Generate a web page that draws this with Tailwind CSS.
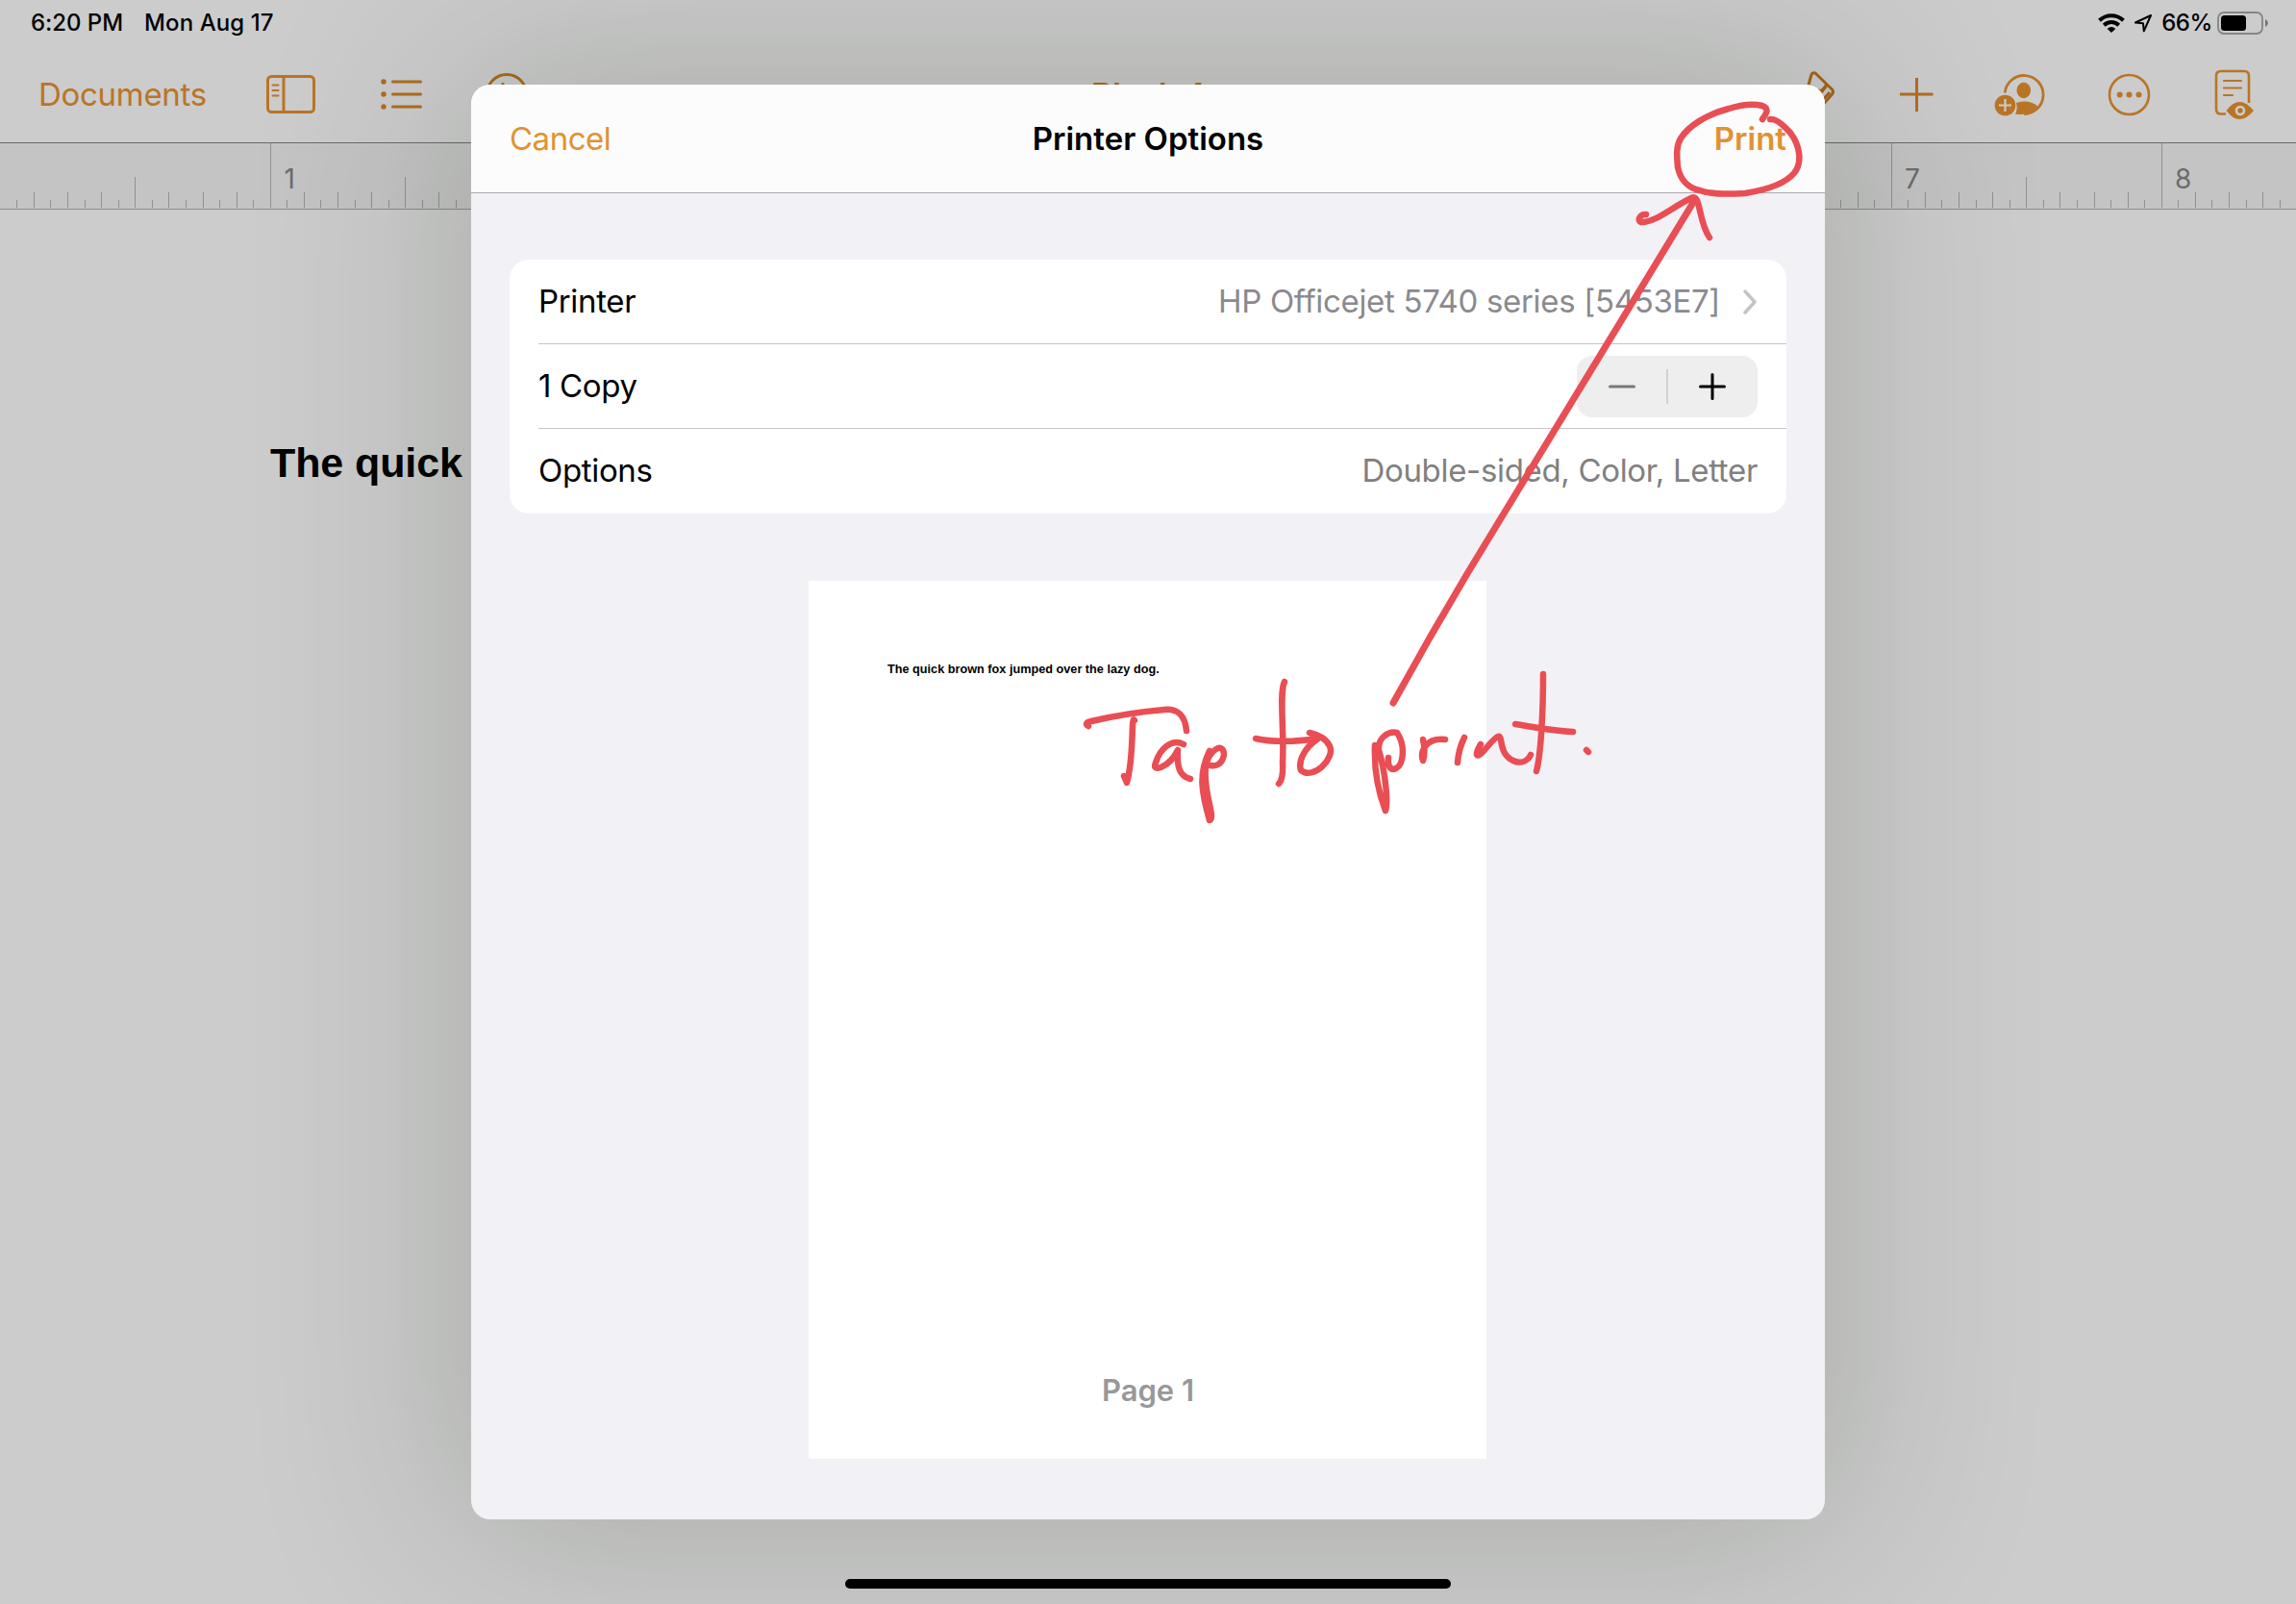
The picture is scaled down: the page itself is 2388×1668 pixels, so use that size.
<!DOCTYPE html>
<html lang="en">
<head>
<meta charset="utf-8">
<title>Printer Options</title>
<script src="https://cdn.jsdelivr.net/npm/@tailwindcss/browser@4"></script>
</head>
<body class="relative h-[1668px] w-[2388px] overflow-hidden bg-[#ccc] font-['Inter',sans-serif] text-black">
  <header class="flex h-[149px] flex-col border-b border-[#6a6a6a]">
    <div class="flex h-12 items-center justify-between pl-8 pr-[29px] text-[24px] leading-none">
      <div class="flex gap-[22px] font-medium"><span class="tracking-[-0.05px]">6:20 PM</span><span class="tracking-[0.1px]">Mon Aug 17</span></div>
      <div class="flex items-center font-medium">
        <svg class="mr-[9px]" width="28" height="22" viewBox="0 0 28 22" fill="none" stroke="#000" stroke-width="4"><path d="M1.5 8.2a18 18 0 0 1 25 0M6.3 13.2a11 11 0 0 1 15.4 0"/><path d="M14 21l-4.3-4.1a6 6 0 0 1 8.6 0z" fill="#000" stroke="none"/></svg>
        <svg class="mr-[9px]" width="20" height="20" viewBox="0 0 20 20" fill="none" stroke="#000" stroke-width="2" stroke-linejoin="round"><path d="M18 2L2 9.5l8 .8.8 8z"/></svg>
        <span class="mr-[5px] tracking-[-0.4px]">66%</span>
        <svg width="53" height="24" viewBox="0 0 53 24"><rect x="1" y="1" width="46" height="22" rx="6" fill="none" stroke="#858585" stroke-width="1.800"/><rect x="4" y="4" width="26" height="16" rx="3.500"/><path d="M50 8q3 1.500 3 4t-3 4z" fill="#777"/></svg>
      </div>
    </div>
    <div class="flex h-[100px] items-center pl-10 text-[#b97526]">
      <span class="w-[173px] pt-px text-[33px] tracking-[-0.3px]">Documents</span>
      <svg class="ml-16" width="51" height="40" viewBox="0 0 51 40" fill="none" stroke="currentColor" stroke-width="3"><rect x="1.500" y="1.500" width="48" height="37" rx="4"/><path d="M18 2v36"/><path d="M6.500 10.500h6M6.500 16h6M6.500 21.500h6" stroke-width="2" stroke-linecap="round"/></svg>
      <svg class="ml-[68px] text-[#b06d1e]" width="44" height="32" viewBox="0 0 44 32" fill="none" stroke="currentColor" stroke-width="3" stroke-linecap="round"><path d="M12.500 3h29M12.500 16h29M12.500 29h29"/><g fill="currentColor" stroke="none"><circle cx="3" cy="3" r="2.700"/><circle cx="3" cy="16" r="2.700"/><circle cx="3" cy="29" r="2.700"/></g></svg>
      <svg class="ml-[65px] text-[#ab691b]" width="44" height="44" viewBox="0 0 44 44" fill="none" stroke="currentColor" stroke-width="2.800"><circle cx="22" cy="22" r="20.500"/><path d="M18 10v24"/></svg>
      <span class="ml-[586px] text-[34px] font-semibold tracking-[-0.5px] text-[#ab691b]">Blank 4</span>
    </div>
  </header>

  <svg class="block text-[#8f908f]" width="2388" height="69" viewBox="0 0 2388 69">
    <rect width="2388" height="69" fill="#c4c4c4"/>
    <path d="M0 68.500h2388" stroke="#8a8a8a"/>
    <g id="ticks" stroke="currentColor" stroke-width="1"></g>
    <g fill="#6c6c6c" font-size="28" font-family="Inter"><text x="295.500" y="47">1</text><text x="1981" y="47">7</text><text x="2262" y="47">8</text></g>
  </svg>
  <p class="mt-[238px] pl-[281px] font-['Liberation_Sans',sans-serif] text-[43px] font-bold leading-[50px] tracking-[-0.1px]">The quick</p>

  <svg class="absolute left-[1870px] top-[60px] text-[#b97526]" width="500" height="80" viewBox="1870 60 500 80" fill="none" stroke="currentColor" stroke-width="3" stroke-linejoin="round">
    <path stroke="#a6651a" d="M1880 92l4-14.500q2-3 4.500-1L1905.500 93q2 2.500 0 5L1893 112M1899.500 88l-5 8-6 4M1903 96l-9 10"/>
    <path d="M1899 88l-5.500 5-5-1 3 8 9-9z" fill="#a6651a" stroke="none"/>
    <path d="M1993.500 81v35M1976 98h34.500" stroke="#b36f20" stroke-linecap="butt"/>
    <path d="M2085.200 96.500a20 20 0 1 1 20 22" stroke-width="2.800"/>
    <g fill="currentColor" stroke="none"><ellipse cx="2104.800" cy="94" rx="7.300" ry="8.200"/><path d="M2096 118.500q2.800-5.500 1-11.500 3-1.500 8-1.500 10 0 14.500 5.500-8 10-23.500 7.500z"/><circle cx="2085.500" cy="109.500" r="10.800"/></g>
    <path d="M2085.500 103v13M2079 109.500h13" stroke="#ccc" stroke-width="2.200"/>
    <circle cx="2214.500" cy="98.500" r="20.500" stroke-width="2.600"/>
    <g fill="currentColor" stroke="none"><circle cx="2204.700" cy="98.500" r="3"/><circle cx="2214.500" cy="98.500" r="3"/><circle cx="2224.500" cy="98.500" r="3"/></g>
    <path d="M2315 118.500h-5q-5 0-5-5V79q0-5 5-5h24q5 0 5 5v28" stroke-width="2.600"/>
    <path d="M2313 84h18M2313 91.500h18M2313 99h9" stroke-width="2.200" stroke-linecap="round"/>
    <path d="M2315.500 115q13.500-18 28.500 0-15 18-28.500 0z" fill="currentColor" stroke="none"/><circle cx="2330" cy="115" r="4" stroke="#ccc" stroke-width="2.600"/>
  </svg>

  <main class="absolute left-[490px] top-[88px] flex h-[1492px] w-[1408px] flex-col rounded-[20px] bg-[#f2f1f6] shadow-[0_0_210px_30px_rgba(15,35,0,0.155)]">
    <div class="grid h-[113px] grid-cols-3 items-center rounded-t-[20px] border-b border-[#a9a9ac] bg-[#fcfcfd] px-10 text-[33px] text-[#e19232]">
      <span class="pt-px tracking-[-0.5px]">Cancel</span>
      <h1 class="pt-px text-center font-semibold text-black">Printer Options</h1>
      <span class="pt-px text-right font-semibold">Print</span>
    </div>
    <section class="mx-10 mt-[69px] h-[264px] rounded-[20px] bg-white pl-[30px] text-[33px] tracking-[-0.33px]">
      <div class="flex h-[88px] items-center justify-between border-b border-[#c6c6c8] pr-[30px]"><span class="pt-px">Printer</span><span class="flex items-center gap-6 pt-px text-[#8a8a8e]">HP Officejet 5740 series [5453E7]<svg width="15" height="26" viewBox="0 0 15 26" fill="none" stroke="#c4c4c7" stroke-width="3.500" stroke-linecap="round" stroke-linejoin="round"><path d="M2 2l10 11L2 24"/></svg></span></div>
      <div class="flex h-[88px] items-center justify-between border-b border-[#c6c6c8] pr-[30px]"><span class="pt-px">1 Copy</span>
        <div class="grid h-16 w-[188px] grid-cols-[93px_95px] place-items-center rounded-[16px] bg-[#eee]">
          <svg width="28" height="4"><rect width="28" height="3" rx="1.500" y=".5" fill="#777977"/></svg>
          <div class="flex h-9 w-full items-center justify-center border-l-2 border-[#d2d2d4] pr-px"><svg width="28" height="28" stroke="#000" stroke-width="3" stroke-linecap="round"><path d="M14 1.500v25M1.500 14h25"/></svg></div>
        </div>
      </div>
      <div class="flex h-[88px] items-center justify-between pr-[30px]"><span>Options</span><span class="text-[#808080]">Double-sided, Color, Letter</span></div>
    </section>
    <section class="ml-[351px] mt-[70px] flex h-[913px] w-[705px] flex-col justify-between bg-white px-[82px] pb-[51px] pt-[84px]">
      <p class="whitespace-nowrap font-['Liberation_Sans',sans-serif] text-[12.700px] font-bold leading-4">The quick brown fox jumped over the lazy dog.</p>
      <p class="pl-px text-center text-[31px] font-semibold leading-10 text-[#98989a]">Page 1</p>
    </section>
  </main>

  <div class="absolute bottom-[16px] left-[879px] h-[10px] w-[630px] rounded-full bg-black"></div>

  <svg class="absolute left-0 top-0" width="2388" height="1668" viewBox="0 0 2388 1668" fill="none" stroke="#e94e54" stroke-width="6.500" stroke-linecap="round" stroke-linejoin="round">
    <path d="M1833 124C1838 117 1840 113 1833 110C1822 107 1811 109 1798 113C1775 119 1756 131 1748 144C1743 152 1744 162 1745 174C1748 188 1757 196 1768 198C1779 202 1799 202 1815 201C1834 198 1856 192 1866 180C1875 169 1872 151 1862 138C1854 129 1847 123 1841 124"/>
    <path d="M1449 731C1477 680 1497 645 1530 590L1762 209" stroke-width="7"/>
    <path d="M1712 223C1705 222 1702 231 1708 231C1722 231 1738 216 1759 206C1769 200 1766 230 1778 247"/>
    <path d="M1132 755Q1127 752 1135 750Q1174 741 1211 738Q1232 736 1234 760M1180 749C1176 742 1180 785 1172 814L1169 807"/>
    <path d="M1231 774C1218 767 1206 780 1202 793C1197 805 1217 797 1225 780C1224 796 1226 807 1238 810"/>
    <path d="M1258 781C1246 805 1250 825 1258 853C1265 850 1251 825 1254 797C1256 781 1273 770 1273 785C1271 796 1263 797 1259 796"/>
    <path d="M1336 709C1330 721 1336 761 1334 793Q1335 810 1330 815M1306 768C1328 773 1350 771 1371 768C1356 778 1350 792 1353 801C1366 812 1389 788 1383 776Q1379 766 1362 762"/>
    <path d="M1430 775C1429 800 1434 825 1441 843C1444 835 1441 803 1434 780C1433 767 1444 760 1453 762C1462 775 1460 795 1452 799C1446 802 1443 796 1444 788"/>
    <path d="M1480 769Q1483 782 1480 791C1477 782 1482 767 1503 769M1523 767Q1517 779 1516 793M1540 774C1534 784 1534 791 1544 780C1560 761 1560 763 1562 775C1566 794 1586 798 1592 785"/>
    <path d="M1605 701C1605 736 1603 783 1598 802M1576 753C1600 757 1614 760 1636 761M1650 780l2 2"/>
  </svg>
<script>
  // Sixteenth-inch ruler marks, one inch = 281px
  const marks = [];
  for (let i = 1; i < 136; i++) {
    const top = i % 16 === 0 ? 0 : i % 8 === 0 ? 35 : i % 2 === 0 ? 51 : 59;
    const x = Math.floor(i * 17.5625 + 0.3) + 0.5;
    marks.push(`<path d="M${x} ${top}V67"/>`);
  }
  document.getElementById('ticks').innerHTML = marks.join('');
</script>
</body>
</html>
